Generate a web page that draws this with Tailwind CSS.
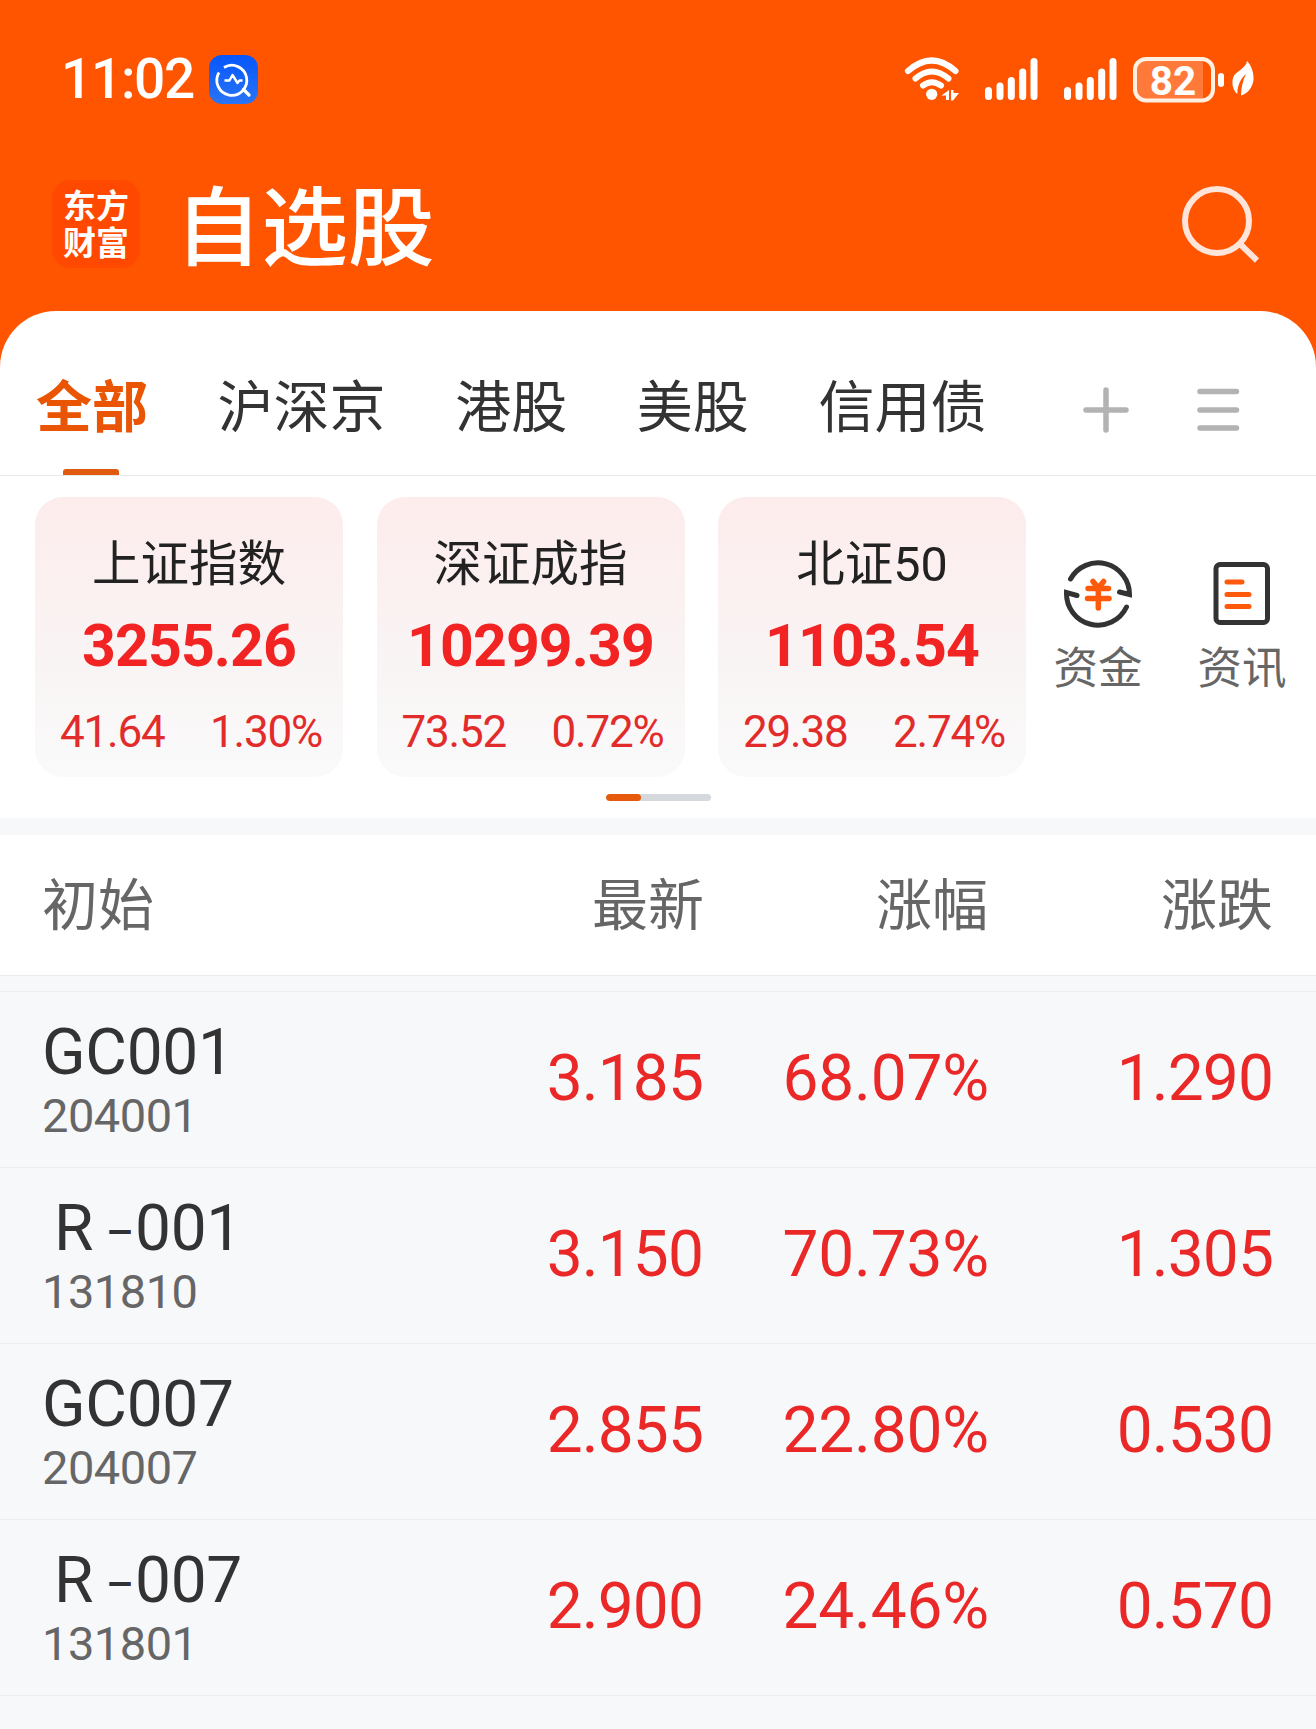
<!DOCTYPE html>
<html lang="zh-CN">
<head>
<meta charset="utf-8">
<title>自选股</title>
<script src="https://cdn.jsdelivr.net/npm/@tailwindcss/browser@4"></script>
</head>
<body class="bg-[#f7f8fa]">
<div class="flex h-[1729px] w-[1316px] flex-col overflow-hidden bg-[#f7f8fa] font-[Roboto,'Noto_Sans_CJK_SC',sans-serif] text-[#333]">

  <!-- Orange header -->
  <div class="bg-[#ff5500]">
    <header class="flex h-[311px] flex-col text-white">
      <div class="flex h-40 items-center pl-[61px] pr-[62px]">
        <div class="w-[148px] pb-[2px] text-[55px] font-medium leading-none tracking-[-1.3px]">11:02</div>
        <svg class="mb-[2px] h-[49px] w-[49px]" viewBox="0 0 49 49" fill="none">
          <defs><linearGradient id="app" x1="0" y1="0" x2="0" y2="1"><stop offset="0" stop-color="#0656fb"/><stop offset="1" stop-color="#2a74f6"/></linearGradient></defs>
          <rect width="49" height="49" rx="13" fill="url(#app)"/>
          <path d="M15 12.5A15 15 0 1 1 10 17.5" stroke="#fff" stroke-width="2.8"/>
          <path d="M34.5 34.5 40 40" stroke="#fff" stroke-width="3.2" stroke-linecap="round"/>
          <path d="M15.500 25.500h5l3-5.500 5 8 2-2.500h3" stroke="#fff" stroke-width="2.400" stroke-linejoin="round"/>
        </svg>
        <svg class="ml-auto h-[50px] w-[350px]" viewBox="904 55 350 50" fill="none">
          <g stroke="#fff" stroke-width="6" stroke-linecap="round">
            <path d="M908 71Q931.700 50 955.500 71"/>
            <path d="M915.500 78.500Q931.700 64.500 948.500 78.500"/>
            <path d="M923 85.500Q931.700 79 941 85.500"/>
          </g>
          <circle cx="931.700" cy="94.300" r="5.600" fill="#fff"/>
          <path d="M941.500 95.500 949 90v10h-3v-4.500zM951 90h2.500v3h5.500l-6 7.500h-2z" fill="#fff"/>
          <g stroke="#fff" stroke-width="7" stroke-linecap="round">
            <path d="M988.500 90.500v6M1000 86v10.500M1011.300 80.500v16M1022.700 72v24.500M1034 61.500v35"/>
            <path d="M1067.500 90.500v6M1079 86v10.500M1090.300 80.500v16M1101.700 72v24.500M1113 61.500v35"/>
          </g>
          <path d="M1146 59h57v42h-57a11 11 0 0 1-11-11v-20a11 11 0 0 1 11-11z" fill="#ff7a3a"/>
          <rect x="1135" y="59" width="78" height="41.500" rx="11" stroke="#fff0e2" stroke-width="4"/>
          <text x="1173" y="94.500" font-size="40.500" font-weight="700" text-anchor="middle" fill="#fff" font-family="Roboto">82</text>
          <rect x="1218" y="73" width="6" height="14" rx="3" fill="#fff"/>
          <path d="M1247 61C1252 66 1254 74 1253.500 80 1252.500 88 1247 94 1241 95.500 1241 88 1243 80 1246 74 1240 79 1237.500 86 1237.300 94 1233 90 1231.500 84 1233 78 1235 71 1246 69 1247 61z" fill="#fff"/>
        </svg>
      </div>
      <div class="flex h-[128px] items-center pl-[52px] pr-[56px]">
        <div class="flex h-22 w-22 flex-col items-center justify-center rounded-[18px] bg-[#ff4800] pt-px text-[33px] font-bold leading-[37px]">
          <span>东方</span><span>财富</span>
        </div>
        <h1 class="ml-[35px] pt-[13px] text-[86.500px] font-medium leading-none">自选股</h1>
        <svg class="ml-auto h-[78px] w-[79px]" viewBox="1181 184 79 78" fill="none" stroke="#ffe4d9" stroke-width="6">
          <circle cx="1217" cy="220" r="32"/><path d="M1240 243 1257 259.500"/>
        </svg>
      </div>
    </header>
    <!-- Group tabs -->
    <nav class="flex h-[165px] items-center rounded-t-[56px] border-b border-[#e9e9e9] bg-white pl-9 text-[56px] leading-none">
      <div class="flex h-full gap-[69.600px]">
        <div class="relative flex items-center pt-[29px] font-bold text-[#ea5504]"><span>全部</span><i class="absolute bottom-0 left-[27px] h-[6px] w-14 rounded-t-[3px] bg-[#e05a10]"></i></div>
        <div class="flex items-center pt-[29px]"><span>沪深京</span></div>
        <div class="flex items-center pt-[29px]"><span>港股</span></div>
        <div class="flex items-center pt-[29px]"><span>美股</span></div>
        <div class="flex items-center pt-[29px]"><span>信用债</span></div>
      </div>
      <svg class="ml-[97px] mt-[34px] h-12 w-[158px]" viewBox="1083 386 158 48" stroke="#b3b3b3" stroke-width="5.500" stroke-linecap="round">
        <path d="M1086 410h40M1106 390v40M1200 391.500h36.500M1200 410h36.500M1200 428h36.500"/>
      </svg>
    </nav>
  </div>

  <!-- Index cards -->
  <section class="flex h-[342px] flex-col bg-white pt-[21px]">
    <div class="flex h-[280px] items-start pl-[35px]">
      <div class="flex gap-[33.500px]">
        <div class="flex h-[280px] w-[308px] flex-col items-center rounded-[28px] bg-linear-to-b from-[#fdecec] via-[#f9f5f5] via-65% to-[#fafafa] px-[25px] pt-[43px]">
          <div class="text-[48.500px] leading-[50px] text-[#222]">上证指数</div>
          <div class="mt-[27px] text-[59px] font-bold leading-[58px] tracking-[-0.900px] text-[#f12323]">3255.26</div>
          <div class="mt-[32px] flex w-full justify-between whitespace-nowrap text-[44px] leading-[50px] tracking-[-1.200px] text-[#e22b2b]"><span>41.64</span><span class="-mr-1">1.30%</span></div>
        </div>
        <div class="flex h-[280px] w-[308px] flex-col items-center rounded-[28px] bg-linear-to-b from-[#fdecec] via-[#f9f5f5] via-65% to-[#fafafa] px-[25px] pt-[43px]">
          <div class="text-[48.500px] leading-[50px] text-[#222]">深证成指</div>
          <div class="mt-[27px] text-[59px] font-bold leading-[58px] tracking-[-0.900px] text-[#f12323]">10299.39</div>
          <div class="mt-[32px] flex w-full justify-between whitespace-nowrap text-[44px] leading-[50px] tracking-[-1.200px] text-[#e22b2b]"><span>73.52</span><span class="-mr-1">0.72%</span></div>
        </div>
        <div class="flex h-[280px] w-[308px] flex-col items-center rounded-[28px] bg-linear-to-b from-[#fdecec] via-[#f9f5f5] via-65% to-[#fafafa] px-[25px] pt-[43px]">
          <div class="text-[48.500px] leading-[50px] text-[#222]">北证50</div>
          <div class="mt-[27px] text-[59px] font-bold leading-[58px] tracking-[-0.900px] text-[#f12323]">1103.54</div>
          <div class="mt-[32px] flex w-full justify-between whitespace-nowrap text-[44px] leading-[50px] tracking-[-1.200px] text-[#e22b2b]"><span>29.38</span><span class="-mr-1">2.74%</span></div>
        </div>
      </div>
      <div class="flex pt-[60px] text-[44.500px] leading-[48px] text-[#666]">
        <div class="flex w-36 flex-col items-center gap-[16px]">
          <svg class="h-[72px] w-[72px]" viewBox="1061 557 72 72" fill="none" stroke="#333" stroke-width="5" stroke-linecap="round">
            <path d="M1069.500 579A31.500 31.500 0 0 1 1128.500 594.500L1118.500 592"/>
            <path d="M1125.500 607A31.500 31.500 0 0 1 1065.500 592.500L1076 595.500"/>
            <path d="M1092 581.500 1097.300 588 1102.600 581.500M1087 588.500h20.500M1086.500 598.500h21.500M1097.300 588v20" stroke="#ff5a0c" stroke-width="5.500"/>
          </svg>
          <span>资金</span>
        </div>
        <div class="flex w-36 flex-col items-center gap-[16px]">
          <svg class="h-[72px] w-[72px]" viewBox="1206 557 72 72" fill="none" stroke="#333" stroke-width="5" stroke-linecap="round">
            <rect x="1216" y="564.500" width="51.500" height="58" rx="4"/>
            <path d="M1227 582h15M1227 594.500h22M1227 606.500h22" stroke="#ff5a0c"/>
          </svg>
          <span>资讯</span>
        </div>
      </div>
    </div>
    <div class="mx-auto mt-[17px] h-[7px] w-[105px] overflow-hidden rounded-full bg-[#d5d8dd]"><div class="h-full w-[35px] rounded-full bg-[#e65a0b]"></div></div>
  </section>

  <!-- Watch list -->
  <div class="mt-[17px] grid h-[141px] grid-cols-[662px_284px_285px] items-center border-b border-[#ebebed] bg-white pl-[42px] pt-[1px] text-right text-[56px] leading-none text-[#666]">
    <div class="flex justify-between"><span>初始</span><span>最新</span></div><span>涨幅</span><span>涨跌</span>
  </div>
  <div class="mt-[15px] flex flex-col border-t border-[#ebedef] text-[64px] leading-none tracking-[-0.900px] text-[#ea2828]">
    <div class="grid h-[176px] grid-cols-[300px_361px_286px_284px] border-b border-[#ebedef] pl-[42px] text-right">
      <div class="pt-[29px] text-left tracking-[-0.300px] text-[#333]"><div>GC001</div><div class="mt-[6px] text-[47px] leading-[50px] tracking-[-0.500px] text-[#666]">204001</div></div>
      <div class="pt-[55px]">3.185</div><div class="pt-[55px] tracking-[-0.200px]">68.07%</div><div class="pt-[55px]">1.290</div>
    </div>
    <div class="grid h-[176px] grid-cols-[300px_361px_286px_284px] border-b border-[#ebedef] pl-[42px] text-right">
      <div class="pt-[29px] text-left tracking-[-0.300px] text-[#333]"><div class="flex h-16 items-baseline pl-[12px]"><span class="w-[52px]">R</span><span class="w-[29px] -translate-y-[3px] text-[43px] font-medium">–</span><span>001</span></div><div class="mt-[6px] text-[47px] leading-[50px] tracking-[-0.500px] text-[#666]">131810</div></div>
      <div class="pt-[55px]">3.150</div><div class="pt-[55px] tracking-[-0.200px]">70.73%</div><div class="pt-[55px]">1.305</div>
    </div>
    <div class="grid h-[176px] grid-cols-[300px_361px_286px_284px] border-b border-[#ebedef] pl-[42px] text-right">
      <div class="pt-[29px] text-left tracking-[-0.300px] text-[#333]"><div>GC007</div><div class="mt-[6px] text-[47px] leading-[50px] tracking-[-0.500px] text-[#666]">204007</div></div>
      <div class="pt-[55px]">2.855</div><div class="pt-[55px] tracking-[-0.200px]">22.80%</div><div class="pt-[55px]">0.530</div>
    </div>
    <div class="grid h-[176px] grid-cols-[300px_361px_286px_284px] border-b border-[#ebedef] pl-[42px] text-right">
      <div class="pt-[29px] text-left tracking-[-0.300px] text-[#333]"><div class="flex h-16 items-baseline pl-[12px]"><span class="w-[52px]">R</span><span class="w-[29px] -translate-y-[3px] text-[43px] font-medium">–</span><span>007</span></div><div class="mt-[6px] text-[47px] leading-[50px] tracking-[-0.500px] text-[#666]">131801</div></div>
      <div class="pt-[55px]">2.900</div><div class="pt-[55px] tracking-[-0.200px]">24.46%</div><div class="pt-[55px]">0.570</div>
    </div>
  </div>
</div>
</body>
</html>
